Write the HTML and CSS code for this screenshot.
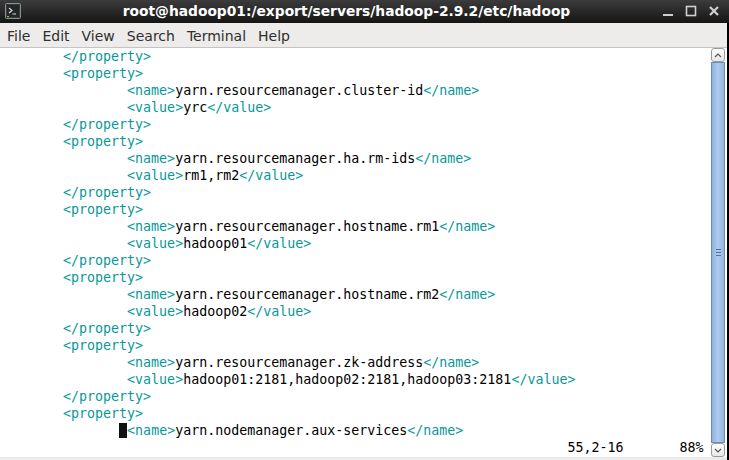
FILE: index.html
```html
<!DOCTYPE html>
<html lang="en">
<head>
    <meta charset="UTF-8">
    <title>root@hadoop01:/export/servers/hadoop-2.9.2/etc/hadoop</title>
    <link rel="stylesheet" href="styles.css">
</head>
<body>
<div class="window">
    <!-- title bar -->
    <div class="titlebar">
        <svg class="app-icon" width="16" height="16" viewBox="0 0 16 16">
            <rect x="0.5" y="0.5" width="15" height="15" rx="1" fill="#3a3d3d" stroke="#8a8f8f"/>
            <rect x="2" y="2" width="12" height="12" fill="#232626"/>
            <path d="M4 5 L7 7.5 L4 10" fill="none" stroke="#d8dcdc" stroke-width="1.2"/>
            <path d="M7.5 11 H11" stroke="#d8dcdc" stroke-width="1"/>
            <rect x="2" y="13" width="2" height="1" fill="#6fcf3a"/>
        </svg>
        <div class="title">root@hadoop01:/export/servers/hadoop-2.9.2/etc/hadoop</div>
        <div class="controls">
            <svg width="12" height="12" viewBox="0 0 12 12"><rect x="1" y="9" width="10" height="2" fill="#d0d0d0"/></svg>
            <svg width="12" height="12" viewBox="0 0 12 12"><rect x="1.5" y="1.5" width="9" height="9" fill="none" stroke="#d0d0d0" stroke-width="1.6"/></svg>
            <svg width="12" height="12" viewBox="0 0 12 12"><path d="M2 2 L10 10 M10 2 L2 10" stroke="#d0d0d0" stroke-width="2.2"/></svg>
        </div>
    </div>

    <!-- menu bar -->
    <div class="menubar">
        <span class="menu-item">File</span>
        <span class="menu-item">Edit</span>
        <span class="menu-item">View</span>
        <span class="menu-item">Search</span>
        <span class="menu-item">Terminal</span>
        <span class="menu-item">Help</span>
    </div>

    <div class="body">
        <pre class="screen">        <span class="tag">&lt;/property&gt;</span>
        <span class="tag">&lt;property&gt;</span>
                <span class="tag">&lt;name&gt;</span>yarn.resourcemanager.cluster-id<span class="tag">&lt;/name&gt;</span>
                <span class="tag">&lt;value&gt;</span>yrc<span class="tag">&lt;/value&gt;</span>
        <span class="tag">&lt;/property&gt;</span>
        <span class="tag">&lt;property&gt;</span>
                <span class="tag">&lt;name&gt;</span>yarn.resourcemanager.ha.rm-ids<span class="tag">&lt;/name&gt;</span>
                <span class="tag">&lt;value&gt;</span>rm1,rm2<span class="tag">&lt;/value&gt;</span>
        <span class="tag">&lt;/property&gt;</span>
        <span class="tag">&lt;property&gt;</span>
                <span class="tag">&lt;name&gt;</span>yarn.resourcemanager.hostname.rm1<span class="tag">&lt;/name&gt;</span>
                <span class="tag">&lt;value&gt;</span>hadoop01<span class="tag">&lt;/value&gt;</span>
        <span class="tag">&lt;/property&gt;</span>
        <span class="tag">&lt;property&gt;</span>
                <span class="tag">&lt;name&gt;</span>yarn.resourcemanager.hostname.rm2<span class="tag">&lt;/name&gt;</span>
                <span class="tag">&lt;value&gt;</span>hadoop02<span class="tag">&lt;/value&gt;</span>
        <span class="tag">&lt;/property&gt;</span>
        <span class="tag">&lt;property&gt;</span>
                <span class="tag">&lt;name&gt;</span>yarn.resourcemanager.zk-address<span class="tag">&lt;/name&gt;</span>
                <span class="tag">&lt;value&gt;</span>hadoop01:2181,hadoop02:2181,hadoop03:2181<span class="tag">&lt;/value&gt;</span>
        <span class="tag">&lt;/property&gt;</span>
        <span class="tag">&lt;property&gt;</span>
               <span class="cursor"> </span><span class="tag">&lt;name&gt;</span>yarn.nodemanager.aux-services<span class="tag">&lt;/name&gt;</span>
                                                                       55,2-16       88%</pre>

        <!-- scrollbar -->
        <div class="scrollbar">
            <div class="sb-btn">
                <svg width="8" height="5" viewBox="0 0 8 5"><path d="M1 4 L4 1 L7 4" fill="none" stroke="#555" stroke-width="1.2"/></svg>
            </div>
            <div class="sb-thumb">
                <div class="grip"></div>
                <div class="grip"></div>
                <div class="grip"></div>
            </div>
            <div class="sb-btn">
                <svg width="8" height="5" viewBox="0 0 8 5"><path d="M1 1 L4 4 L7 1" fill="none" stroke="#555" stroke-width="1.2"/></svg>
            </div>
        </div>
    </div>
    <div class="bottom"></div>
</div>
</body>
</html>
```

FILE: styles.css
```css
body {
    margin: 0;
    background: #000;
    overflow: hidden;
}

.window {
    width: 727px;
    height: 460px;
    background: #fff;
    display: flex;
    flex-direction: column;
}

/* title bar */
.titlebar {
    height: 23px;
    flex: none;
    background: linear-gradient(#3b3b3b, #151515);
    display: flex;
    align-items: center;
    padding: 0 4px 1px 5px;
    width: 729px;
    box-sizing: border-box;
}

.app-icon {
    flex: none;
}

.title {
    flex: 1;
    text-align: center;
    color: #fff;
    font-family: "DejaVu Sans", sans-serif;
    font-weight: bold;
    font-size: 13.8px;
    padding-left: 10px;
}

.controls {
    display: flex;
    gap: 11px;
    padding-right: 5px;
}

/* menu bar */
.menubar {
    height: 25px;
    flex: none;
    box-sizing: border-box;
    background: #edeceb;
    border-bottom: 1px solid #c4c4c4;
    display: flex;
    align-items: center;
    padding: 1px 0 0 7px;
    font-family: "DejaVu Sans", sans-serif;
    font-size: 14px;
    color: #2e2e2e;
}

.menu-item {
    margin-right: 12px;
}

/* terminal */
.body {
    display: flex;
    flex: 1;
    min-height: 0;
}

.screen {
    margin: 0 0 0 -1px;
    width: 712px;
    font-family: "DejaVu Sans Mono", monospace;
    font-size: 13.3px;
    line-height: 17px;
    color: #000;
    overflow: hidden;
}

.tag {
    color: #06989a;
}

.cursor {
    background: #111;
}

.scrollbar {
    width: 14px;
    display: flex;
    flex-direction: column;
}

.sb-btn {
    height: 14px;
    border: 1px solid #9a9a9a;
    border-radius: 3px;
    background: linear-gradient(#fff, #e8e8e8);
    display: flex;
    align-items: center;
    justify-content: center;
    box-sizing: border-box;
}

.sb-thumb {
    flex: 1;
    background: linear-gradient(90deg, #8eb2e0, #b0cdf0 50%, #93b5e0);
    border: 1px solid #6c8cba;
    display: flex;
    flex-direction: column;
    align-items: center;
    justify-content: center;
    gap: 2px;
}

.grip {
    width: 5px;
    height: 1px;
    background: #4f6f9c;
}

.bottom {
    height: 3px;
    flex: none;
    background: #ebebeb;
}
```
